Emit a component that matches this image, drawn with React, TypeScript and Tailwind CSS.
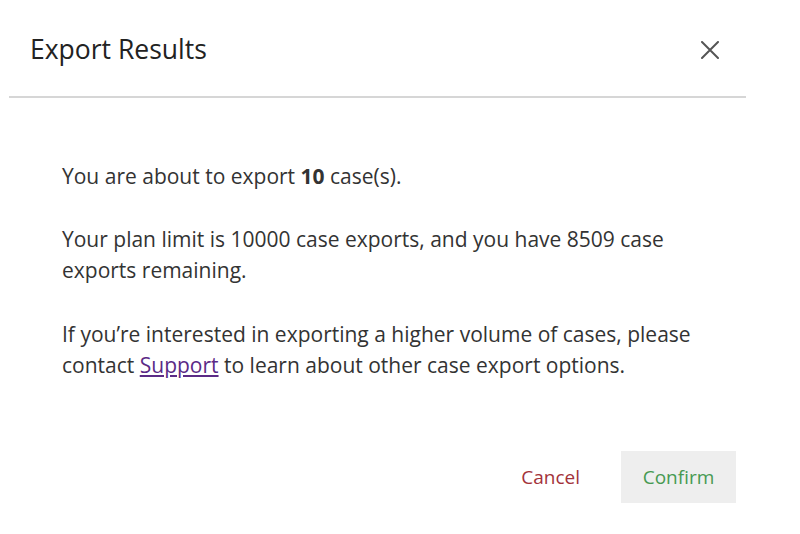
export default function App() {
  return (
    <div className="min-h-screen bg-white" style={{ fontFamily: '"Open Sans", "Liberation Sans", sans-serif' }}>
      <div className="ml-[9px] w-[737px]">
        {/* Header */}
        <div className="flex h-[98px] items-center justify-between border-b-2 border-[#d6d6d6] pl-[21px] pr-[18px] pt-[3px]">
          <h2 className="text-[26.5px] font-normal text-[#222]">Export Results</h2>
          <button className="flex h-[36px] w-[36px] items-center justify-center text-[#555]">
            <svg width="18" height="18" viewBox="0 0 18 18" fill="none" stroke="currentColor" strokeWidth="2" strokeLinecap="round">
              <path d="M1 1L17 17M17 1L1 17" />
            </svg>
          </button>
        </div>

        {/* Body */}
        <div className="pl-[53px] pr-[34px] pt-[63px] text-[21px] leading-[31px] text-[#333]">
          <p>
            You are about to export <strong className="font-bold">10</strong> case(s).
          </p>
          <p className="mt-[32px]">
            Your plan limit is 10000 case exports, and you have 8509 case exports remaining.
          </p>
          <p className="mt-[33px]">
            If you’re interested in exporting a higher volume of cases, please contact{' '}
            <a href="#" className="inline-block text-[#5b2a86] underline">Support</a> to learn about other case
            export options.
          </p>
        </div>

        {/* Footer */}
        <div className="mt-[70px] flex items-center justify-end gap-[41px] pr-[10px]">
          <button className="text-[19px] text-[#a3323a]">Cancel</button>
          <button className="h-[52px] w-[115px] bg-[#eeeeee] text-[19px] text-[#479a52]">Confirm</button>
        </div>
      </div>
    </div>
  )
}
